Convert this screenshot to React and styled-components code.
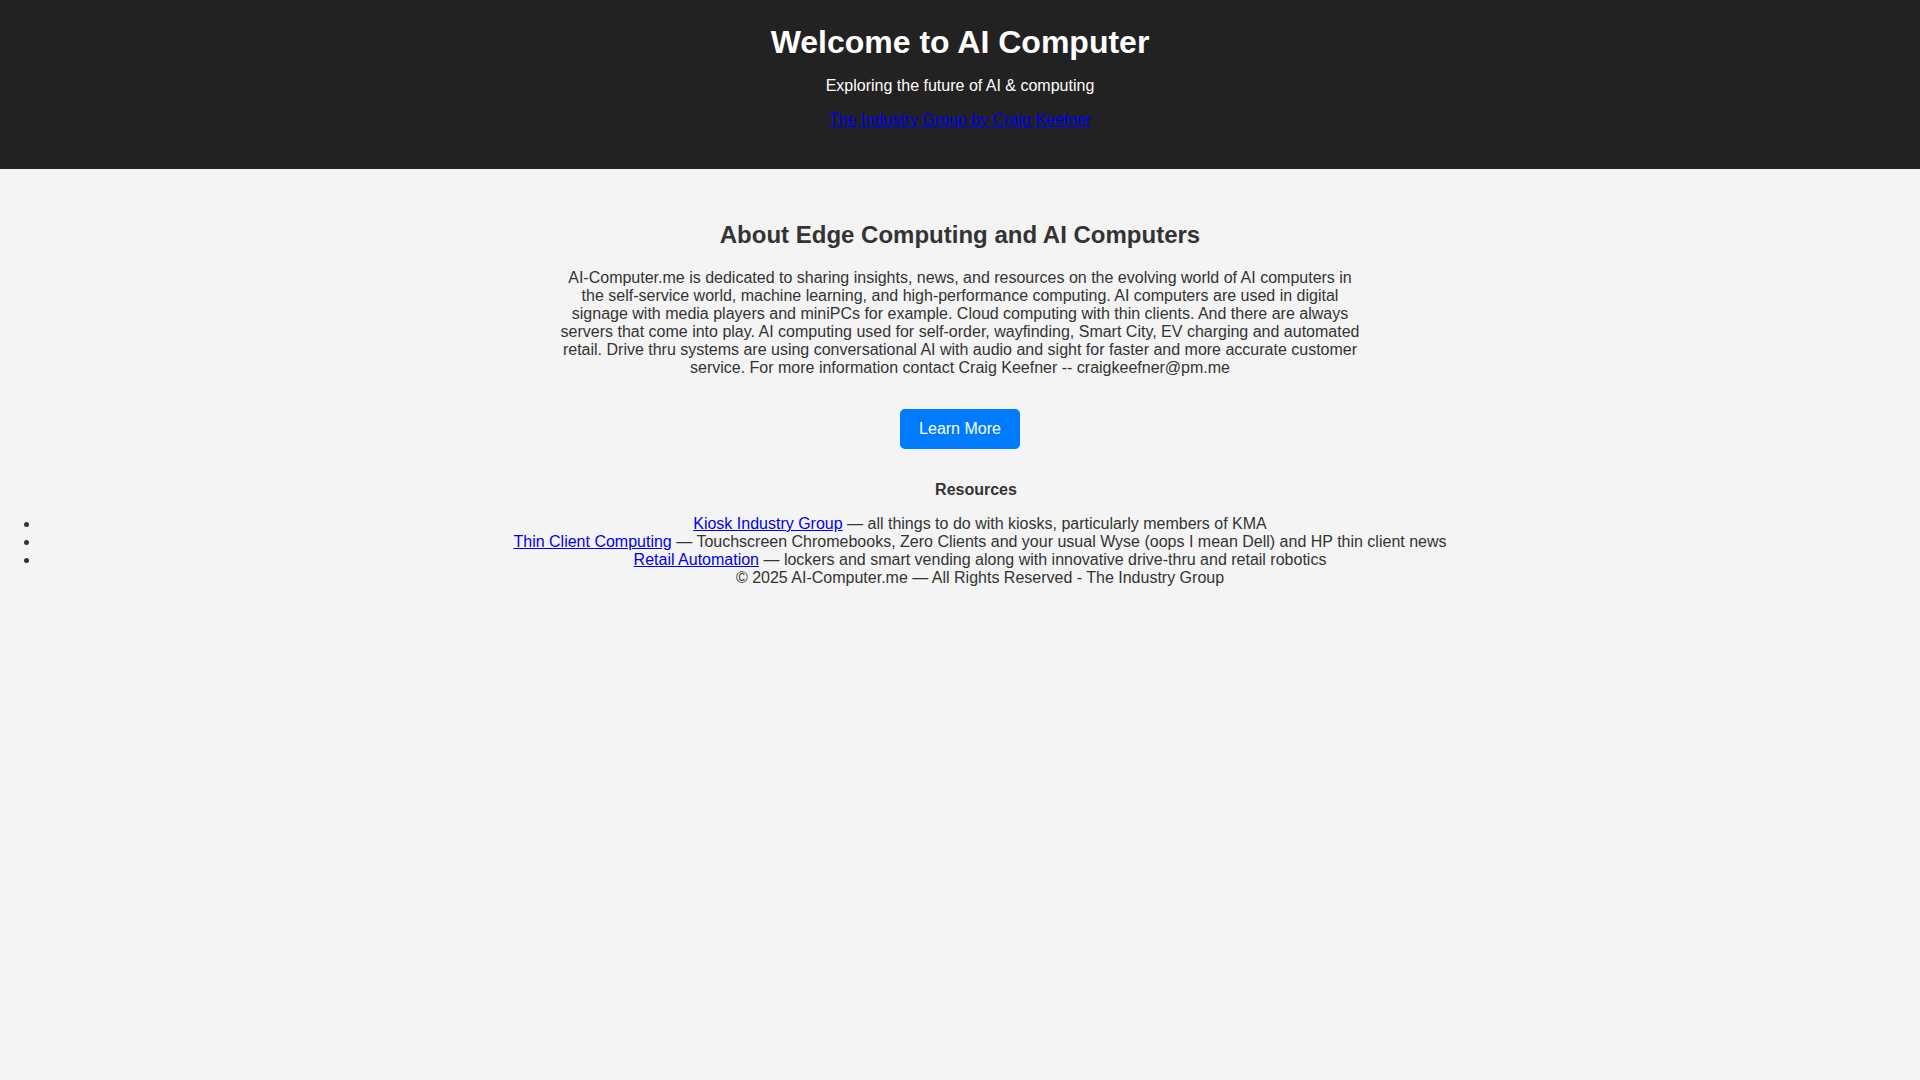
import React from "react";
import styled, { createGlobalStyle } from "styled-components";

const GlobalStyle = createGlobalStyle`
  html, body {
    margin: 0;
    padding: 0;
    background: #f4f4f4;
    font-family: "Liberation Sans", Arial, sans-serif;
    color: #333;
  }
`;

const Header = styled.header`
  background: #222;
  color: #fff;
  text-align: center;
  padding: 24px 0;
`;

const Title = styled.h1`
  margin: 0;
  font-size: 32px;
  font-weight: bold;
`;

const HeaderText = styled.p`
  margin: 16px 0;
  font-size: 16px;
`;

const Link = styled.a`
  color: #0000ee;
  text-decoration: underline;
`;

const About = styled.section`
  max-width: 800px;
  margin: 0 auto;
  padding-top: 32px;
  text-align: center;
`;

const SectionTitle = styled.h2`
  margin: 19.92px 0;
  font-size: 24px;
  font-weight: bold;
  color: #333;
`;

const Body = styled.p`
  margin: 16px 0;
  font-size: 16px;
`;

const Actions = styled.div`
  margin-top: 32px;
  display: flex;
  justify-content: center;
`;

const Button = styled.a`
  display: inline-block;
  background: #007bff;
  color: #fff;
  text-decoration: none;
  font-size: 16px;
  line-height: 18px;
  padding: 11px 19px;
  border-radius: 5px;
`;

const Resources = styled.section`
  padding-left: 40px;
  margin-top: 32px;
  text-align: center;
`;

const ResourcesTitle = styled.h4`
  margin: 0 0 16px;
  padding-right: 8px;
  font-size: 16px;
  font-weight: bold;
`;

const List = styled.ul`
  margin: 0;
  padding: 0;
  list-style: disc outside;
`;

const Item = styled.li`
  font-size: 16px;
`;

const Footer = styled.footer`
  font-size: 16px;
`;

const resources = [
  {
    name: "Kiosk Industry Group",
    text: "all things to do with kiosks, particularly members of KMA",
  },
  {
    name: "Thin Client Computing",
    text: "Touchscreen Chromebooks, Zero Clients and your usual Wyse (oops I mean Dell) and HP thin client news",
  },
  {
    name: "Retail Automation",
    text: "lockers and smart vending along with innovative drive-thru and retail robotics",
  },
];

export default function App() {
  return (
    <>
      <GlobalStyle />
      <Header>
        <Title>Welcome to AI Computer</Title>
        <HeaderText>Exploring the future of AI &amp; computing</HeaderText>
        <HeaderText>
          <Link href="#">The Industry Group by Craig Keefner</Link>
        </HeaderText>
      </Header>
      <About>
        <SectionTitle>About Edge Computing and AI Computers</SectionTitle>
        <Body>
          AI-Computer.me is dedicated to sharing insights, news, and resources on the evolving world of AI computers in the self-service world, machine learning, and high-performance computing. AI computers are used in digital signage with media players and miniPCs for example. Cloud computing with thin clients. And there are always servers that come into play. AI computing used for self-order, wayfinding, Smart City, EV charging and automated retail. Drive thru systems are using conversational AI with audio and sight for faster and more accurate customer service. For more information contact Craig Keefner -- craigkeefner@pm.me
        </Body>
        <Actions>
          <Button href="#">Learn More</Button>
        </Actions>
      </About>
      <Resources>
        <ResourcesTitle>Resources</ResourcesTitle>
        <List>
          {resources.map((r) => (
            <Item key={r.name}>
              <Link href="#">{r.name}</Link> — {r.text}
            </Item>
          ))}
        </List>
        <Footer>© 2025 AI-Computer.me — All Rights Reserved - The Industry Group</Footer>
      </Resources>
    </>
  );
}
